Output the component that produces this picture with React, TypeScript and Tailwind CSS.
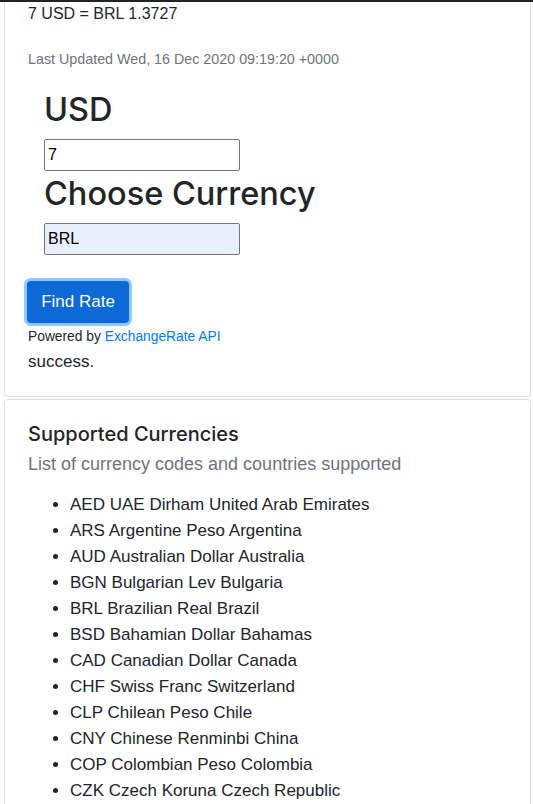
const currencies = [
  ['AED', 'UAE Dirham', 'United Arab Emirates'],
  ['ARS', 'Argentine Peso', 'Argentina'],
  ['AUD', 'Australian Dollar', 'Australia'],
  ['BGN', 'Bulgarian Lev', 'Bulgaria'],
  ['BRL', 'Brazilian Real', 'Brazil'],
  ['BSD', 'Bahamian Dollar', 'Bahamas'],
  ['CAD', 'Canadian Dollar', 'Canada'],
  ['CHF', 'Swiss Franc', 'Switzerland'],
  ['CLP', 'Chilean Peso', 'Chile'],
  ['CNY', 'Chinese Renminbi', 'China'],
  ['COP', 'Colombian Peso', 'Colombia'],
  ['CZK', 'Czech Koruna', 'Czech Republic'],
]

export default function App() {
  return (
    <div className="min-h-screen bg-white text-[#212529] font-['Liberation_Sans',Arial,sans-serif]">
      <div className="h-[2px] bg-[#222222]" />

      {/* converter card, top edge scrolled off */}
      <div className="ml-[4px] mr-[2px] border border-t-0 border-[#dfdfdf] rounded-b-[4px] pl-[23px] pr-[20px] pb-[21px]">
        <p className="text-[16px] leading-[24px]">7 USD = BRL 1.3727</p>
        <p className="mt-[23px] text-[14.3px] leading-[20px] text-[#6c757d]">
          Last Updated Wed, 16 Dec 2020 09:19:20 +0000
        </p>

        <form className="pl-[16px]" onSubmit={(e) => e.preventDefault()}>
          <h1 className="mt-[20px] font-['Inter',sans-serif] text-[32.5px] leading-[42px] font-medium">USD</h1>
          <input
            defaultValue="7"
            className="mt-[8px] block w-[196px] h-[32px] px-[3px] border border-[#767676] rounded-[2px] text-[16px] text-black outline-none"
          />
          <h1 className="mt-[2px] font-['Inter',sans-serif] text-[32.5px] leading-[42px] font-medium">Choose Currency</h1>
          <input
            defaultValue="BRL"
            className="mt-[8px] block w-[196px] h-[32px] px-[3px] border border-[#767676] rounded-[2px] bg-[#e8f0fe] text-[16px] text-black outline-none"
          />
        </form>

        <button className="mt-[26px] -ml-px w-[102px] h-[42px] rounded-[4px] bg-[#0d69d6] text-white text-[17px] shadow-[0_0_0_3px_rgba(38,143,255,0.5)]">
          Find Rate
        </button>
        <p className="mt-[4px] text-[13.8px] leading-[20px]">
          Powered by <a className="text-[#007bff]">ExchangeRate API</a>
        </p>
        <p className="mt-[2px] text-[17px] leading-[26px]">success.</p>
      </div>

      {/* supported currencies card */}
      <div className="mt-[2px] ml-[4px] mr-[2px] border border-[#dfdfdf] rounded-[4px] pl-[23px] pr-[20px] pt-[21px] pb-[20px]">
        <h5 className="font-['Inter',sans-serif] text-[20px] leading-[26px] font-medium">Supported Currencies</h5>
        <h6 className="mt-[5px] text-[18px] leading-[24px] text-[#6c757d]">
          List of currency codes and countries supported
        </h6>
        <ul className="mt-[16px] pl-[42px] list-disc text-[17px] leading-[26px]">
          {currencies.map(([code, name, country]) => (
            <li key={code}>
              {code} {name} {country}
            </li>
          ))}
        </ul>
      </div>
    </div>
  )
}
